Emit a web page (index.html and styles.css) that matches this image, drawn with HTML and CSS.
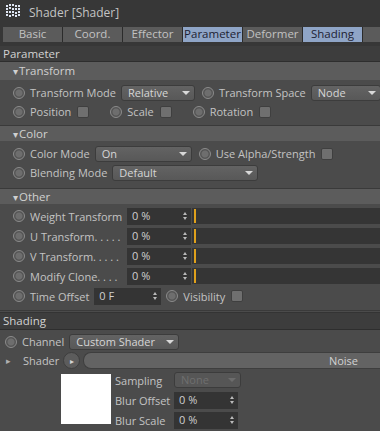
FILE: index.html
```html
<!DOCTYPE html>
<html>
<head>
<title>Shader [Shader]</title>
<link rel="stylesheet" href="styles.css">
</head>
<body>

<div class="window">

<div class="titlebar">
  <svg class="logo" width="16" height="14" viewBox="0 0 16 14">
    <g fill="#dfe6f4">
      <rect x="1" y="1" width="2" height="2"/><rect x="4" y="0" width="2" height="2"/><rect x="7" y="0" width="2" height="2"/><rect x="10" y="1" width="2" height="2"/><rect x="13" y="1" width="2" height="2"/>
      <rect x="1" y="4" width="2" height="2"/><rect x="4" y="3" width="2" height="2"/><rect x="7" y="4" width="2" height="2"/><rect x="10" y="4" width="2" height="2"/><rect x="13" y="4" width="2" height="2"/>
      <rect x="1" y="7" width="2" height="2"/><rect x="4" y="7" width="2" height="2"/><rect x="7" y="7" width="2" height="2"/><rect x="10" y="8" width="2" height="2"/><rect x="13" y="7" width="2" height="2"/>
      <rect x="1" y="10" width="2" height="2"/><rect x="4" y="11" width="2" height="2"/><rect x="7" y="10" width="2" height="2"/><rect x="10" y="11" width="2" height="2"/><rect x="13" y="10" width="2" height="2"/>
    </g>
  </svg>
  <span>Shader [Shader]</span>
</div>

<div class="tabs">
  <div class="tab">Basic</div>
  <div class="tab">Coord.</div>
  <div class="tab">Effector</div>
  <div class="tab on">Parameter</div>
  <div class="tab">Deformer</div>
  <div class="tab on">Shading</div>
  <div class="tab">F</div>
</div>

<div class="section-head">Parameter</div>

<div class="group">
  <div class="group-head first"><span class="tri">&#9662;</span>Transform</div>
  <div class="row">
    <i class="radio"></i><span class="label">Transform Mode</span>
    <div class="drop w-rel">Relative</div>
    <i class="radio"></i><span class="label">Transform Space</span>
    <div class="drop w-node">Node</div>
  </div>
  <div class="row">
    <i class="radio"></i><span class="label">Position</span><i class="check"></i>
    <i class="radio"></i><span class="label">Scale</span><i class="check"></i>
    <i class="radio"></i><span class="label">Rotation</span><i class="check"></i>
  </div>
</div>

<div class="group">
  <div class="group-head"><span class="tri">&#9662;</span>Color</div>
  <div class="row">
    <i class="radio"></i><span class="label">Color Mode</span>
    <div class="drop w-on">On</div>
    <i class="radio"></i><span class="label">Use Alpha/Strength</span><i class="check"></i>
  </div>
  <div class="row">
    <i class="radio"></i><span class="label">Blending Mode</span>
    <div class="drop w-def">Default</div>
  </div>
</div>

<div class="group other">
  <div class="group-head"><span class="tri">&#9662;</span>Other</div>
  <div class="row wide">
    <i class="radio"></i><span class="label fixed">Weight Transform</span>
    <div class="num">0 %</div><div class="slider"><b></b></div>
  </div>
  <div class="row wide">
    <i class="radio"></i><span class="label fixed">U Transform. . . . .</span>
    <div class="num">0 %</div><div class="slider"><b></b></div>
  </div>
  <div class="row wide">
    <i class="radio"></i><span class="label fixed">V Transform. . . . .</span>
    <div class="num">0 %</div><div class="slider"><b></b></div>
  </div>
  <div class="row wide">
    <i class="radio"></i><span class="label fixed">Modify Clone. . . .</span>
    <div class="num">0 %</div><div class="slider"><b></b></div>
  </div>
  <div class="row wide">
    <i class="radio"></i><span class="label">Time Offset</span>
    <div class="num w-time">0 F</div>
    <i class="radio"></i><span class="label">Visibility</span><i class="check"></i>
  </div>
</div>

<div class="section-head shading">Shading</div>

<div class="shade">
  <div class="row flush">
    <i class="radio"></i><span class="label">Channel</span>
    <div class="drop w-chan">Custom Shader</div>
  </div>
  <div class="row flush">
    <span class="mini-tri">&#9656;</span><span class="label">Shader</span>
    <span class="round-btn">&#9656;</span>
    <div class="pill">Noise</div>
  </div>
  <div class="preview-block">
    <div class="preview"></div>
    <div class="props">
      <div class="prop"><span class="plabel">Sampling</span><div class="drop w-prop off">None</div></div>
      <div class="prop"><span class="plabel">Blur Offset</span><div class="num w-prop">0 %</div></div>
      <div class="prop"><span class="plabel">Blur Scale</span><div class="num w-prop">0 %</div></div>
    </div>
  </div>
</div>

</div>

</body>
</html>
```

FILE: styles.css
```css
body {
    margin: 0;
    background-color: #4b4b4b;
    font-family: "Open Sans", "Noto Sans", sans-serif;
    font-size: 11px;
    color: #c9c9c9;
}

.window {
    width: 380px;
    height: 431px;
    overflow: hidden;
    background-color: #4b4b4b;
}

.titlebar {
    height: 24px;
    background-color: #373737;
    display: flex;
    align-items: center;
    gap: 8px;
    padding-left: 5px;
    font-size: 12px;
    color: #c4c4c4;
}

.logo {
    margin-top: -3px;
}

.tabs {
    display: flex;
    overflow: hidden;
    background-color: #373737;
    padding: 3px 0 4px 3px;
}

.tab {
    flex: none;
    width: 59px;
    height: 15px;
    line-height: 14px;
    text-align: center;
    background-color: #5b5b5b;
    border-right: 1px solid #2b2b2b;
    color: #c2c2c2;
    font-size: 11.5px;
}

.tab.on {
    background-color: #8fa5c7;
    color: #1d2233;
}

.section-head {
    height: 15px;
    line-height: 15px;
    padding-left: 3px;
    background-color: #3d3d3d;
    border-bottom: 1px solid #2e2e2e;
    color: #d2d2d2;
    font-size: 11.5px;
}

.group {
    background-color: #4b4b4b;
    border-bottom: 1px solid #3a3a3a;
    padding-bottom: 4px;
}

.group-head {
    height: 15px;
    line-height: 15px;
    padding-left: 13px;
    background-color: #5c5c5c;
    color: #d0d0d0;
    margin-bottom: 3px;
    font-size: 11.5px;
}

.group-head.first {
    height: 18px;
    line-height: 17px;
}

.group + .group {
    padding-bottom: 6px;
}

.group.other {
    padding-bottom: 4px;
}

.other .group-head {
    margin-bottom: 2px;
}

.tri {
    font-size: 10px;
    margin-right: 1px;
}

.row {
    height: 19px;
    display: flex;
    align-items: center;
    padding-left: 13px;
    white-space: nowrap;
}

.row.wide {
    height: 20px;
}

.row.flush {
    padding-left: 5px;
}

.radio {
    flex: none;
    box-sizing: border-box;
    width: 12px;
    height: 12px;
    border-radius: 50%;
    border: 1px solid #8c8c8c;
    background: radial-gradient(circle, #6e6e6e 0, #6e6e6e 3px, #555 4px);
    margin-right: 5px;
}

.label {
    color: #c3c3c3;
    margin-right: 5px;
}

.label.fixed {
    width: 93px;
    margin-right: 4px;
}

.check {
    flex: none;
    width: 10px;
    height: 10px;
    border-radius: 2px;
    background-color: #6f6f6f;
    border: 1px solid #3f3f3f;
    margin-right: 21px;
    margin-left: 1px;
}

.drop {
    flex: none;
    box-sizing: border-box;
    height: 16px;
    line-height: 14px;
    padding-left: 6px;
    border-radius: 3px;
    border: 1px solid #3c3c3c;
    background: linear-gradient(#636363, #585858);
    color: #d6d6d6;
    margin-right: 7px;
    position: relative;
}

.drop::after {
    content: "";
    position: absolute;
    right: 4px;
    top: 5px;
    border-left: 4px solid transparent;
    border-right: 4px solid transparent;
    border-top: 4px solid #d8d8d8;
}

.drop.off {
    color: #6f6f6f;
    background: #565656;
}

.drop.off::after {
    border-top-color: #6c6c6c;
}

.w-rel { width: 74px; }
.w-node { width: 70px; margin-right: 0; }
.w-on { width: 97px; }
.w-def { width: 146px; }
.w-chan { width: 110px; }
.w-prop { width: 67px; }

.num {
    flex: none;
    box-sizing: border-box;
    width: 64px;
    height: 17px;
    line-height: 16px;
    padding-left: 5px;
    background-color: #343434;
    color: #cfcfcf;
    position: relative;
}

.num::after {
    content: "";
    position: absolute;
    right: 4px;
    top: 4px;
    width: 0;
    height: 0;
    border-left: 2px solid transparent;
    border-right: 2px solid transparent;
    border-bottom: 3px solid #bbb;
}

.num::before {
    content: "";
    position: absolute;
    right: 4px;
    top: 9px;
    width: 0;
    height: 0;
    border-left: 2px solid transparent;
    border-right: 2px solid transparent;
    border-top: 3px solid #bbb;
}

.w-time {
    width: 67px;
    margin-right: 5px;
}

.slider {
    flex: 1;
    height: 16px;
    margin-left: 1px;
    background-color: #353535;
    display: flex;
    align-items: center;
}

.slider b {
    width: 2px;
    height: 14px;
    margin-left: 2px;
    background-color: #e0a11c;
}

.section-head.shading {
    margin-top: 1px;
    height: 16px;
    line-height: 16px;
    border-top: 1px solid #343434;
}

.shade {
    padding-top: 2px;
}

.mini-tri {
    width: 12px;
    font-size: 9px;
    color: #b0b0b0;
    margin-right: 5px;
    padding-left: 1px;
}

.round-btn {
    flex: none;
    box-sizing: border-box;
    width: 17px;
    height: 17px;
    border-radius: 50%;
    background-color: #5c5c5c;
    border: 1px solid #3e3e3e;
    font-size: 8px;
    line-height: 15px;
    text-align: center;
    color: #d5d5d5;
    margin-right: 3px;
    margin-left: -1px;
}

.pill {
    flex: 1;
    height: 17px;
    line-height: 16px;
    box-sizing: border-box;
    border-radius: 8px 0 0 8px;
    background-color: #636363;
    border: 1px solid #3e3e3e;
    border-right: none;
    text-align: right;
    padding-right: 22px;
    color: #d2d2d2;
}

.preview-block {
    display: flex;
    padding-left: 61px;
}

.preview {
    flex: none;
    width: 50px;
    height: 50px;
    margin-top: 4px;
    background-color: #ffffff;
    margin-right: 4px;
}

.props {
    display: flex;
    flex-direction: column;
}

.prop {
    height: 20px;
    display: flex;
    align-items: center;
    white-space: nowrap;
}

.plabel {
    width: 59px;
    color: #c3c3c3;
}
```
